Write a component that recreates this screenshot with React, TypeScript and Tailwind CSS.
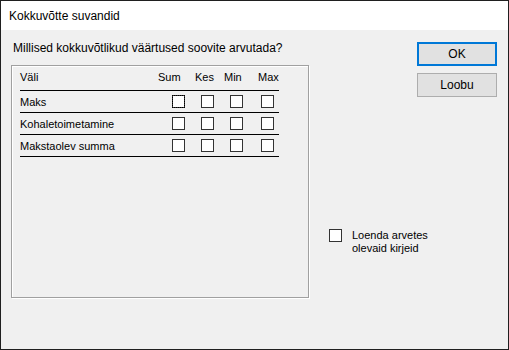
import React from 'react';

const rows = ['Maks', 'Kohaletoimetamine', 'Makstaolev summa'];

function Box({ focused }: { focused?: boolean }) {
  return (
    <div className="w-[13px] h-[13px] border border-[#333333] bg-white relative">
      {focused && <div className="absolute inset-[-1px] border border-dotted border-black" />}
    </div>
  );
}

export default function App() {
  return (
    <div
      className="w-[509px] h-[350px] border border-[#1f1f1f] flex flex-col text-black"
      style={{ fontFamily: '"Liberation Sans", Arial, sans-serif' }}
    >
      <div className="h-[29px] bg-white flex items-center pl-2 text-[12px]">Kokkuvõtte suvandid</div>

      <div className="flex-1 bg-[#f0f0f0] flex">
        {/* left side */}
        <div className="w-[309px] pl-[10px] pt-[10px]">
          <div className="ml-[2px] h-[16px] leading-[16px] text-[12px]">
            Millised kokkuvõtlikud väärtused soovite arvutada?
          </div>
          <div className="mt-[9px] w-[298px] h-[233px] border border-[#a0a0a0] shadow-[1px_1px_0_#ffffff,inset_1px_1px_0_#ffffff] pl-[8px] pr-[29px] text-[11px]">
            <div className="grid grid-cols-[138px_37px_29px_34px_1fr] h-[25px] items-center border-b border-black pb-[2px]">
              <span>Väli</span>
              <span>Sum</span>
              <span>Kes</span>
              <span>Min</span>
              <span>Max</span>
            </div>
            {rows.map((r, i) => (
              <div
                key={r}
                className="grid grid-cols-[152px_29px_29px_31px_1fr] h-[22px] items-center border-b border-black"
              >
                <span className="pt-[2px]">{r}</span>
                <Box focused={i === 0} />
                <Box />
                <Box />
                <Box />
              </div>
            ))}
          </div>
        </div>

        {/* right side */}
        <div className="flex-1 flex flex-col pt-[12px] pr-[11px]">
          <div className="self-end flex flex-col gap-[7px]">
            <button className="w-[80px] h-[24px] bg-[#e1e1e1] border-2 border-[#0078d7] text-[12px]">OK</button>
            <button className="w-[80px] h-[24px] bg-[#e1e1e1] border border-[#adadad] text-[12px]">Loobu</button>
          </div>
          <div className="mt-[132px] ml-[19px] flex gap-[10px] text-[11px] leading-[13px]">
            <Box />
            <span>
              Loenda arvetes
              <br />
              olevaid kirjeid
            </span>
          </div>
        </div>
      </div>
    </div>
  );
}
